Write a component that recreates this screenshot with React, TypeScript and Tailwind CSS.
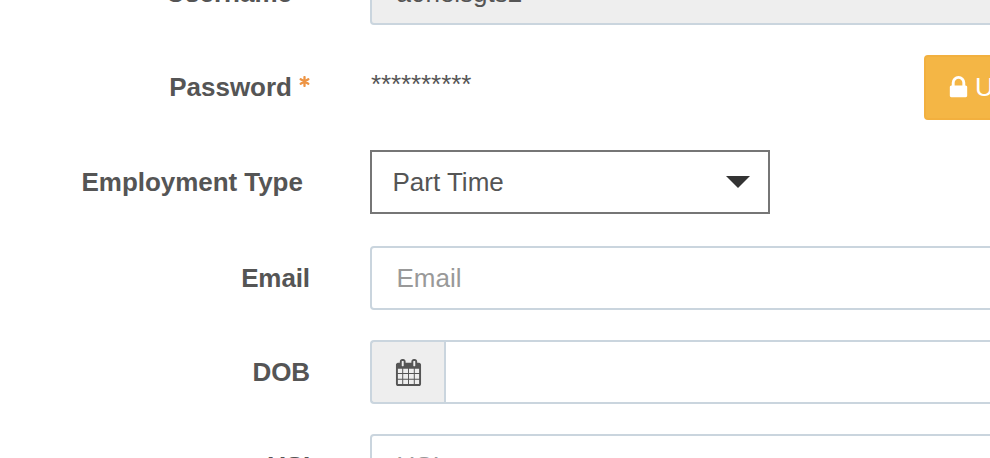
import type { ReactNode } from 'react';

const LockIcon = () => (
    <svg viewBox="0 0 1792 1792" fill="currentColor" className="w-[27px] h-[27px] -mx-[5px] -mt-px shrink-0">
        <path d="M640 768h512v-192q0-106-75-181t-181-75-181 75-75 181v192zm832 96v576q0 40-28 68t-68 28h-960q-40 0-68-28t-28-68v-576q0-40 28-68t68-28h32v-192q0-184 132-316t316-132 316 132 132 316v192h32q40 0 68 28t28 68z" />
    </svg>
);

const CalendarIcon = () => (
    <svg viewBox="0 0 1792 1792" fill="currentColor" className="w-[27px] h-[27px]">
        <path d="M192 1664h288v-288h-288v288zm352 0h320v-288h-320v288zm-352-352h288v-320h-288v320zm352 0h320v-320h-320v320zm-352-384h288v-288h-288v288zm736 736h320v-288h-320v288zm-384-736h320v-288h-320v288zm768 736h288v-288h-288v288zm-384-352h320v-320h-320v320zm-352-864v-288q0-13-9.5-22.5t-22.5-9.5h-64q-13 0-22.5 9.5t-9.5 22.5v288q0 13 9.5 22.5t22.5 9.5h64q13 0 22.5-9.5t9.5-22.5zm736 864h288v-320h-288v320zm-384-384h320v-288h-320v288zm384 0h288v-288h-288v288zm32-480v-288q0-13-9.5-22.5t-22.5-9.5h-64q-13 0-22.5 9.5t-9.5 22.5v288q0 13 9.5 22.5t22.5 9.5h64q13 0 22.5-9.5t9.5-22.5zm384-64v1280q0 52-38 90t-90 38h-1408q-52 0-90-38t-38-90v-1280q0-52 38-90t90-38h128v-96q0-66 47-113t113-47h64q66 0 113 47t47 113v96h384v-96q0-66 47-113t113-47h64q66 0 113 47t47 113v96h128q52 0 90 38t38 90z" />
    </svg>
);

const Required = () => (
    <svg viewBox="0 0 11 11" className="inline-block w-[11px] h-[11px] ml-[7px] mb-[9px] align-baseline">
        <path
            d="M5.5 1.1V9.9M1.7 3.3L9.3 7.7M9.3 3.3L1.7 7.7"
            stroke="#ed9444"
            strokeWidth="2.3"
            strokeLinecap="round"
        />
    </svg>
);

const Row = ({ label, children }: { label: ReactNode; children: ReactNode }) => (
    <div className="flex h-16 shrink-0">
        <label className="w-[310px] mr-[60px] shrink-0 h-16 leading-[64px] text-right font-bold whitespace-pre">
            {label}
        </label>
        {children}
    </div>
);

const field =
    'w-[760px] h-16 shrink-0 border-2 border-[#cad5de] rounded-[4px] pl-[24.5px] pr-6 placeholder:text-[#999999] outline-none';

const App = () => {
    return (
        <div className="w-[990px] h-[458px] overflow-hidden bg-white text-[#555555] font-['Liberation_Sans',Arial,sans-serif] text-[26px]">
            <form className="flex flex-col -mt-[39px]">
                <Row label={<>Username<Required /></>}>
                    <input className={`${field} bg-[#eeeeee]`} defaultValue="a0nelsgts2" readOnly />
                </Row>
                <div className="h-[30px]" />
                <Row label={<>Password<Required /></>}>
                    <span className="w-[554px] shrink-0 leading-[58px] pl-px tracking-[-0.1px]">**********</span>
                    <button
                        type="button"
                        className="flex items-center gap-[8px] w-[230px] h-[65px] shrink-0 px-6 bg-[#f4b645] border-2 border-[#f2b03f] rounded-[4px] text-white"
                    >
                        <LockIcon />
                        Update
                    </button>
                </Row>
                <div className="h-[31px]" />
                <Row label={<span className="tracking-[-0.05px]">{'Employment Type '}</span>}>
                    <div className="flex items-center justify-between w-[400px] h-16 pl-[20.5px] pr-[18px] border-2 border-[#767676]">
                        Part Time
                        <svg viewBox="0 0 24 12" className="w-[24px] h-[12px]">
                            <path d="M0 0H24L12 12Z" fill="#333333" />
                        </svg>
                    </div>
                </Row>
                <div className="h-8" />
                <Row label={<span className="tracking-[-0.1px]">Email</span>}>
                    <input className={field} placeholder="Email" />
                </Row>
                <div className="h-[30px]" />
                <Row label={<span className="tracking-[-0.1px]">DOB</span>}>
                    <div className="flex items-center justify-center w-[74px] h-16 shrink-0 bg-[#eeeeee] border-2 border-r-0 border-[#cad5de] rounded-l-[4px]">
                        <CalendarIcon />
                    </div>
                    <input className="w-[700px] h-16 shrink-0 border-2 border-[#cad5de] px-6 outline-none" />
                </Row>
                <div className="h-[30px]" />
                <Row label={<span className="tracking-[-0.2px]">USI</span>}>
                    <input className={field} placeholder="USI" />
                </Row>
            </form>
        </div>
    );
};

export default App;
